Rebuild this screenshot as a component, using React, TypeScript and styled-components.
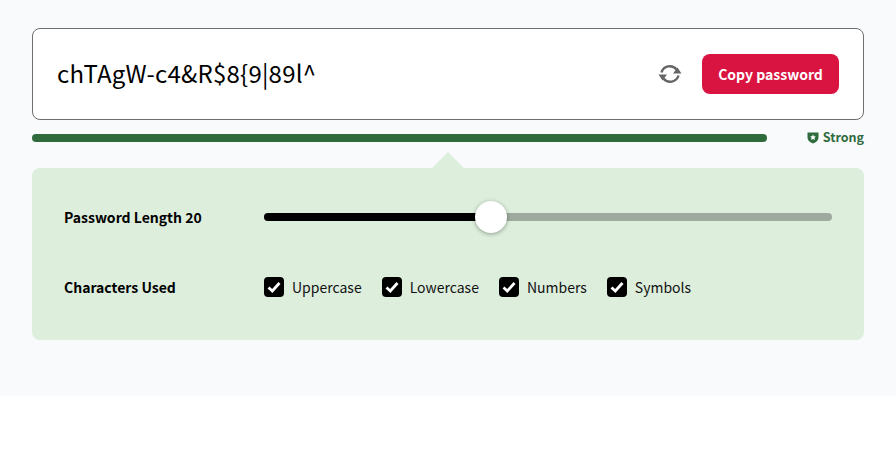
import React from 'react';
import styled, { createGlobalStyle } from 'styled-components';

const GlobalStyle = createGlobalStyle`
  html, body {
    margin: 0;
    background: #fff;
    font-family: "Noto Sans CJK SC", "Noto Sans", sans-serif;
  }
`;

const Page = styled.main`
  box-sizing: border-box;
  height: 396px;
  padding: 28px 32px 0;
  background: #f9fafc;
`;

const PasswordCard = styled.section`
  box-sizing: border-box;
  height: 92px;
  display: flex;
  align-items: center;
  padding: 0 24px;
  background: #fff;
  border: 1px solid #6e6e6e;
  border-radius: 8px;
`;

const PasswordText = styled.div`
  flex: 1;
  font-size: 24px;
  letter-spacing: 0.2px;
  line-height: 36px;
  margin-top: -2px;
  color: #000;
`;

const RefreshButton = styled.button`
  width: 24px;
  height: 24px;
  padding: 0;
  margin-right: 20px;
  border: 0;
  background: none;
  color: #666;
  display: flex;
`;

const CopyButton = styled.button`
  width: 137px;
  height: 40px;
  padding: 0;
  border: 0;
  border-radius: 8px;
  background: #d91440;
  color: #fff;
  font: 700 14px/40px "Noto Sans CJK SC", sans-serif;
`;

const MeterRow = styled.div`
  height: 32px;
  display: flex;
  align-items: flex-start;
  justify-content: space-between;
  padding-top: 14px;
  box-sizing: border-box;
`;

const MeterBar = styled.div`
  width: 735px;
  height: 8px;
  border-radius: 4px;
  background: #2f6b3c;
`;

const Strength = styled.div`
  display: flex;
  align-items: center;
  gap: 4px;
  margin-top: -5px;
  font-size: 12.5px;
  font-weight: 700;
  line-height: 16px;
  color: #2f6b3c;
`;

const Arrow = styled.div`
  height: 16px;
  display: flex;
  justify-content: center;
  &::before {
    content: '';
    border-left: 16px solid transparent;
    border-right: 16px solid transparent;
    border-bottom: 16px solid #ddeedd;
  }
`;

const Panel = styled.section`
  box-sizing: border-box;
  height: 172px;
  padding: 0 32px;
  background: #ddeedd;
  border-radius: 8px;
  display: grid;
  grid-template-rows: 98px 42px;
  align-content: start;
`;

const Row = styled.div`
  display: grid;
  grid-template-columns: 200px 1fr;
  align-items: center;
`;

const RowLabel = styled.div`
  font-size: 14px;
  font-weight: 700;
  line-height: 20px;
  color: #000;
`;

const Track = styled.div`
  position: relative;
  height: 8px;
  border-radius: 4px;
  background: #9eaa9e;
`;

const TrackFill = styled.div`
  height: 100%;
  border-radius: 4px 0 0 4px;
  background: #000;
`;

const Thumb = styled.div`
  position: absolute;
  top: -12px;
  width: 32px;
  height: 32px;
  margin-left: -16px;
  border-radius: 50%;
  background: #fff;
  box-shadow: 0 1px 4px rgba(0, 0, 0, 0.35);
`;

const Options = styled.div`
  display: flex;
  gap: 20px;
`;

const Option = styled.label`
  display: flex;
  align-items: center;
  gap: 8px;
  font-size: 14px;
  line-height: 20px;
  color: #111;
`;

const CheckBox = styled.span`
  width: 20px;
  height: 20px;
  border-radius: 4px;
  background: #000;
  display: flex;
  align-items: center;
  justify-content: center;
`;

const options = ['Uppercase', 'Lowercase', 'Numbers', 'Symbols'];
const sliderValue = 40;

export default function App() {
  return (
    <>
      <GlobalStyle />
      <Page>
        <PasswordCard>
          <PasswordText>chTAgW-c4&amp;R$8{'{'}9|89l^</PasswordText>
          <RefreshButton aria-label="Regenerate">
            <svg width="24" height="24" viewBox="0 0 24 24" fill="none">
              <path d="M3.500 10.500A8.600 8.600 0 0 1 18.500 7.500" stroke="currentColor" strokeWidth="2.400" />
              <path d="M20.500 13.500A8.600 8.600 0 0 1 5.500 16.500" stroke="currentColor" strokeWidth="2.400" />
              <path d="M15 11.500h8.500L19.500 5.500zM9 12.500H.5L4.500 18.500z" fill="currentColor" />
            </svg>
          </RefreshButton>
          <CopyButton>Copy password</CopyButton>
        </PasswordCard>
        <MeterRow>
          <MeterBar />
          <Strength>
            <svg width="12" height="13" viewBox="0 0 12 13">
              <path d="M.5 1.500h11v5c0 3-2.800 5-5.500 6-2.700-1-5.500-3-5.500-6z" fill="currentColor" />
              <path d="M6 3.500l.9 1.800 2 .3-1.400 1.300.3 2L6 8l-1.800.9.300-2L3.100 5.600l2-.3z" fill="#f9fafc" />
            </svg>
            Strong
          </Strength>
        </MeterRow>
        <Arrow />
        <Panel>
          <Row>
            <RowLabel>Password Length 20</RowLabel>
            <Track>
              <TrackFill style={{ width: `${sliderValue}%` }} />
              <Thumb style={{ left: `${sliderValue}%` }} />
            </Track>
          </Row>
          <Row>
            <RowLabel>Characters Used</RowLabel>
            <Options>
              {options.map((name) => (
                <Option key={name}>
                  <CheckBox>
                    <svg width="16" height="16" viewBox="0 0 16 16" fill="none">
                      <path d="M2.500 8.500l3.800 3.500L13.500 4" stroke="#fff" strokeWidth="2.800" />
                    </svg>
                  </CheckBox>
                  {name}
                </Option>
              ))}
            </Options>
          </Row>
        </Panel>
      </Page>
    </>
  );
}
